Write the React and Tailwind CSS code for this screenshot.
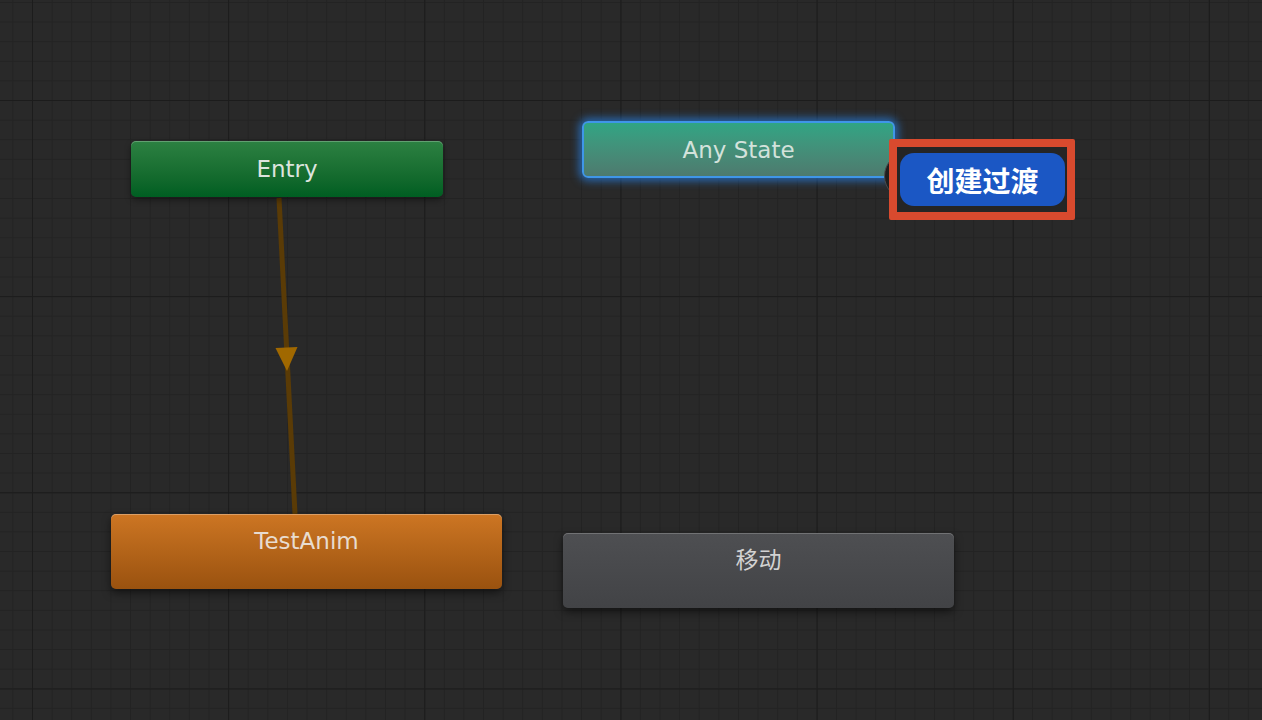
const nodeFont = "font-['DejaVu_Sans','Noto_Sans_CJK_SC',sans-serif]";

function StateNode({ className, textClass, label, top }) {
  return (
    <div
      className={`absolute flex justify-center rounded-[5px] ${top ? 'items-start pt-[13px]' : 'items-center'} ${className}`}
    >
      <span className={`${nodeFont} text-[23px] leading-[28px] ${textClass}`}>{label}</span>
    </div>
  );
}

function App() {
  return (
    <div className="relative h-[720px] w-[1262px] overflow-hidden bg-[#292929] bg-[linear-gradient(to_right,#1c1c1c_1px,transparent_1px),linear-gradient(to_bottom,#1c1c1c_1px,transparent_1px),linear-gradient(to_right,#232323_1px,transparent_1px),linear-gradient(to_bottom,#232323_1px,transparent_1px)] [background-size:196.17px_196.17px,196.17px_196.17px,19.617px_19.617px,19.617px_19.617px] [background-position:32px_100px]">
      {/* transition Entry -> TestAnim */}
      <svg className="absolute inset-0" width="1262" height="720">
        <line x1="279" y1="198" x2="295" y2="514" stroke="#5a3b06" strokeWidth="5" />
        <polygon points="275.5,348 297.5,347 287,371" fill="#a06800" />
      </svg>

      <StateNode
        label="Entry"
        className="left-[131px] top-[141px] h-[56px] w-[312px] bg-linear-to-b from-[#2c8142] to-[#005e22] shadow-[inset_0_1px_0_rgba(255,255,255,0.25),0_3px_6px_rgba(0,0,0,0.4)]"
        textClass="text-[#dde4de]"
      />

      <StateNode
        label="Any State"
        className="left-[582px] top-[121px] h-[57px] w-[313px] rounded-[6px] border-2 border-[#3f96e8] bg-linear-to-b from-[#2fa584] to-[#4d7a6e] shadow-[0_0_8px_3px_rgba(40,130,230,0.7)]"
        textClass="text-[#d3e2db]"
      />

      <StateNode
        top
        label="TestAnim"
        className="left-[111px] top-[514px] h-[75px] w-[391px] bg-linear-to-b from-[#cd7623] to-[#9a520f] shadow-[inset_0_1px_0_rgba(255,255,255,0.3),0_4px_8px_rgba(0,0,0,0.5)]"
        textClass="text-[#e8dccf]"
      />

      <StateNode
        top
        label="移动"
        className="left-[563px] top-[533px] h-[75px] w-[391px] bg-linear-to-b from-[#4e4f52] to-[#424346] shadow-[inset_0_1px_0_rgba(255,255,255,0.2),0_4px_8px_rgba(0,0,0,0.5)]"
        textClass="text-[#d2d2d2]"
      />

      {/* context popup */}
      <div className="absolute left-[884px] top-[152px] h-[48px] w-[48px] rounded-full border border-[#4a4a4a] bg-[#1f1f1f]" />
      <div className="absolute left-[889px] top-[139px] flex h-[81px] w-[186px] items-center justify-center rounded-[2px] border-[8px] border-[#d84a2e] bg-[#252525] pl-[1px]">
        <div className="flex h-[53px] w-[165px] items-center justify-center rounded-[14px] bg-[#1b57c4]">
          <span className="font-['Noto_Sans_CJK_SC',sans-serif] text-[28px] font-bold leading-none text-white">创建过渡</span>
        </div>
      </div>
    </div>
  );
}

export default App;
